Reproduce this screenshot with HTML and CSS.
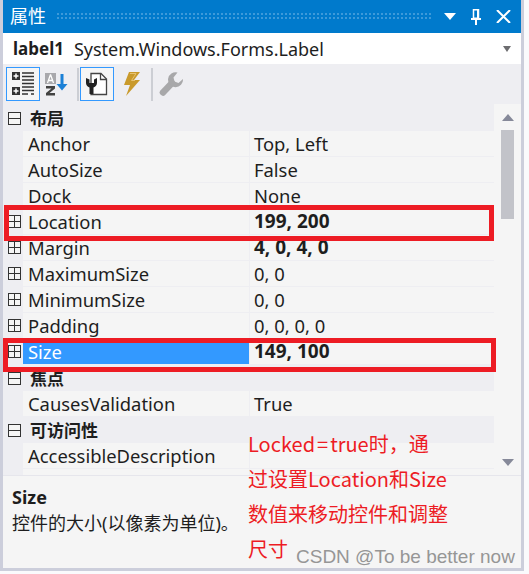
FILE: index.html
```html
<!DOCTYPE html>
<html>
	<head>
		<meta charset="UTF-8">
		<title>属性</title>
		<link rel="stylesheet" href="styles.css">
	</head>
	<body>
		<div id="panel">
			<div class="titlebar">
				<span class="title">属性</span>
				<span class="grip"></span>
				<svg class="tbtn" width="12" height="7" viewBox="0 0 12 7"><path d="M0 0h12L6 7z" fill="#fff"/></svg>
				<svg class="tbtn" width="10" height="16" viewBox="0 0 10 16"><path d="M2.500 .75h5v8.500h-5z" fill="none" stroke="#fff" stroke-width="1.500"/><path d="M6 1h2v8H6zM0 9h10v2H0zM4 11h2v5H4z" fill="#fff"/></svg>
				<svg class="tbtn" width="15" height="13" viewBox="0 0 15 13"><path d="M1 0l13 13M14 0L1 13" fill="none" stroke="#fff" stroke-width="2"/></svg>
			</div>
			<div class="combo">
				<b>label1</b><span class="type">System.Windows.Forms.Label</span>
				<svg class="drop" width="8" height="6" viewBox="0 0 8 6"><path d="M0 0h8L4 6z" fill="#6d6d70"/></svg>
			</div>
			<div class="toolbar">
				<span class="tool on">
					<svg width="24" height="24" viewBox="0 0 24 24"><path d="M1 0h8v8H1zM1 15h8v8H1z" fill="#333"/><path d="M5 1.500v5M2.500 4h5M5 16.500v5M2.500 19h5" stroke="#fff" stroke-width="1.500"/><path d="M11 1h12M11 4.500h12M11 8h12M11 11.500h12M11 15h12M11 18.500h12M11 22h6M20 22h3" stroke="#333" stroke-width="1.500"/></svg>
				</span>
				<span class="tool">
					<svg width="24" height="24" viewBox="0 0 24 24"><path d="M0 1h11v11H0z" fill="#a8a8ac"/><path d="M5.500 2.500L2.500 11M5.500 2.500l3 8.500M3.500 8.500h4" stroke="#fff" stroke-width="1.300" fill="none"/><path d="M1 14h9v2.500L4.500 21H10v2.500H1V21l5.500-4.500H1z" fill="#424242"/><path d="M17 2v13" stroke="#1b80d6" stroke-width="3"/><path d="M11.500 12h11L17 18.500z" fill="#1b80d6"/></svg>
				</span>
				<span class="sep"></span>
				<span class="tool on">
					<svg width="26" height="26" viewBox="0 0 26 26"><path d="M7 2.500h10l5.500 5.500v15.500H7z" fill="#fff" stroke="#444" stroke-width="1.300"/><path d="M16.500 2.500v6h6" fill="none" stroke="#444" stroke-width="1.300"/><path d="M2 7v5a5 5 0 0 0 3.500 4.500V23h4v-6.500A5 5 0 0 0 13 12V7l-3 1.500V12H5.500V8.500z" fill="#222"/></svg>
				</span>
				<span class="tool">
					<svg width="20" height="26" viewBox="0 0 20 26"><path d="M8 1h11l-6 8h6L5 25l4-11H3z" fill="#c99a2c"/><path d="M9 2.500h6l-4.500 7H14" fill="none" stroke="#e6c272" stroke-width="1"/></svg>
				</span>
				<span class="sep"></span>
				<span class="tool">
					<svg width="26" height="26" viewBox="0 0 26 26"><path d="M5 21.500L14 12" stroke="#a8a8aa" stroke-width="6.500" stroke-linecap="round"/><path d="M19.500 1.500A7.500 7.500 0 1 0 25 8l-4.500 4-4-1.500-1-4z" fill="#a8a8aa"/></svg>
				</span>
			</div>
			<div class="main">
				<div class="grid">
					<div class="group"><span class="box minus"></span><b>布局</b></div>
					<div class="row"><span class="gut"></span><span class="name">Anchor</span><span class="val">Top, Left</span></div>
					<div class="row"><span class="gut"></span><span class="name">AutoSize</span><span class="val">False</span></div>
					<div class="row"><span class="gut"></span><span class="name">Dock</span><span class="val">None</span></div>
					<div class="row"><span class="gut"><span class="box plus"></span></span><span class="name">Location</span><span class="val bold">199, 200</span></div>
					<div class="row"><span class="gut"><span class="box plus"></span></span><span class="name">Margin</span><span class="val bold">4, 0, 4, 0</span></div>
					<div class="row"><span class="gut"><span class="box plus"></span></span><span class="name">MaximumSize</span><span class="val">0, 0</span></div>
					<div class="row"><span class="gut"><span class="box plus"></span></span><span class="name">MinimumSize</span><span class="val">0, 0</span></div>
					<div class="row"><span class="gut"><span class="box plus"></span></span><span class="name">Padding</span><span class="val">0, 0, 0, 0</span></div>
					<div class="row"><span class="gut"><span class="box plus"></span></span><span class="name sel">Size</span><span class="val bold">149, 100</span></div>
					<div class="group"><span class="box minus"></span><b>焦点</b></div>
					<div class="row"><span class="gut"></span><span class="name">CausesValidation</span><span class="val">True</span></div>
					<div class="group"><span class="box minus"></span><b>可访问性</b></div>
					<div class="row"><span class="gut"></span><span class="name">AccessibleDescription</span><span class="val"></span></div>
					<div class="row"><span class="gut"></span><span class="name"></span><span class="val"></span></div>
				</div>
				<div class="scroll">
					<span class="up"></span>
					<div class="track"><span class="thumb"></span></div>
					<span class="down"></span>
				</div>
			</div>
			<div class="help">
				<b>Size</b>
				<p>控件的大小(以像素为单位)。</p>
			</div>
		</div>

		<span class="mark mark1"></span>
		<span class="mark mark2"></span>
		<div class="note">Locked<span class="eq">=</span>true时，通<br>过设置Location和Size<br>数值来移动控件和调整<br>尺寸</div>
		<div class="wm">CSDN @To be better now</div>
	</body>
</html>
```

FILE: styles.css
```css
body,div,p{
	margin: 0;
	padding: 0;
}
body{
	width: 529px;
	height: 574px;
	position: relative;
	overflow: hidden;
	background: #fafafc;
	font-family: "Noto Sans", "Noto Sans CJK SC", sans-serif;
	font-size: 18px;
	color: #1e1e1e;
}
#panel{
	width: 518px;
	height: 568px;
	border: 3px solid #cccedb;
	border-top: 0;
	background: #eeeef2;
	display: flex;
	flex-direction: column;
}
.titlebar{
	height: 33px;
	background: #007acc;
	color: #fff;
	display: flex;
	align-items: center;
	padding: 0 10px 0 7px;
	flex: none;
}
.title{
	font-size: 18px;
	line-height: 33px;
}
.grip{
	flex: 1;
	height: 8px;
	margin: 0 12px 0 11px;
	background-image: radial-gradient(circle at 1px 1px, #3d9ada 1px, transparent 1px);
	background-size: 4px 4px;
}
.tbtn{
	margin-right: 15px;
	flex: none;
}
.tbtn:last-child{
	margin-right: 0;
}
.combo{
	height: 31px;
	background: #fff;
	display: flex;
	align-items: center;
	padding: 0 10px 0 10px;
	flex: none;
}
.combo b{
	font-weight: 700;
	font-size: 17px;
}
.type{
	margin-left: 10px;
	flex: 1;
}
.toolbar{
	height: 40px;
	display: flex;
	align-items: center;
	padding-left: 3px;
	flex: none;
}
.tool{
	width: 34px;
	height: 34px;
	display: flex;
	align-items: center;
	justify-content: center;
	border: 1px solid transparent;
	box-sizing: border-box;
}
.tool.on{
	border-color: #3399ff;
	background: #f5f5f5;
}
.sep{
	width: 2px;
	height: 33px;
	background: #ccced4;
	margin: 0 1px 0 3px;
}
.main{
	display: flex;
	height: 371px;
	flex: none;
}
.grid{
	width: 491px;
	padding-top: 1px;
	overflow: hidden;
}
.group{
	height: 26px;
	display: flex;
	align-items: center;
	padding-left: 5px;
}
.group b{
	margin: 0 0 2px 9px;
	font-weight: 700;
	font-size: 17px;
}
.box{
	width: 13px;
	height: 13px;
	border: 1px solid #333;
	box-sizing: border-box;
	position: relative;
	display: block;
	background: #f5f5f5;
}
.box:before{
	content: "";
	position: absolute;
	left: 0;
	right: 0;
	top: 5px;
	height: 1px;
	background: #333;
}
.plus:after{
	content: "";
	position: absolute;
	top: 0;
	bottom: 0;
	left: 5px;
	width: 1px;
	background: #333;
}
.row{
	height: 26px;
	display: flex;
	background: #f5f5f5;
	box-shadow: inset 0 -1px 0 #eeeef2;
	font-size: 18.400px;
}
.gut{
	width: 20px;
	background: #eeeef2;
	padding: 6px 0 0 5px;
	box-sizing: border-box;
	flex: none;
}
.name{
	width: 227px;
	padding-left: 5px;
	box-sizing: border-box;
	line-height: 25px;
	border-right: 1px solid #eeeef2;
	flex: none;
}
.name.sel{
	background: #3399ff;
	color: #fff;
	height: 25px;
}
.val{
	padding-left: 4px;
	line-height: 25px;
}
.val.bold{
	font-weight: 700;
	font-size: 19px;
}
.scroll{
	width: 27px;
	background: #f5f5f5;
	display: flex;
	flex-direction: column;
}
.up,.down{
	height: 26px;
	display: flex;
	align-items: center;
	justify-content: center;
	flex: none;
}
.up:before,.down:before{
	content: "";
	border-left: 6.500px solid transparent;
	border-right: 6.500px solid transparent;
}
.up:before{
	border-bottom: 7px solid #868999;
}
.down:before{
	border-top: 7px solid #868999;
}
.track{
	flex: 1;
}
.thumb{
	display: block;
	width: 13px;
	height: 89px;
	margin-left: 7px;
	background: #c2c3c9;
}
.help{
	flex: 1;
	background: #f5f5f5;
	padding: 8px 9px;
	border-top: 1px solid #e6e6ec;
	line-height: 26px;
}
.help b{
	display: block;
	font-weight: 700;
	font-size: 18px;
}
.help p{
	font-size: 18px;
}

/* annotations on top of the picture */
.mark{
	position: absolute;
	border: 5px solid #ed1c24;
	box-sizing: border-box;
}
.mark1{
	left: 4px;
	top: 205px;
	width: 490px;
	height: 36px;
}
.mark2{
	left: 3px;
	top: 338px;
	width: 493px;
	height: 34px;
}
.note{
	position: absolute;
	left: 248px;
	top: 426px;
	font-family: "Noto Sans CJK SC", sans-serif;
	font-size: 20px;
	line-height: 35px;
	color: #ed1c24;
	white-space: nowrap;
}
.eq{
	margin: 0 2px;
}
.wm{
	position: absolute;
	left: 296px;
	top: 546px;
	font-family: "Liberation Sans", sans-serif;
	font-size: 19px;
	color: #969696;
	white-space: nowrap;
}
```
